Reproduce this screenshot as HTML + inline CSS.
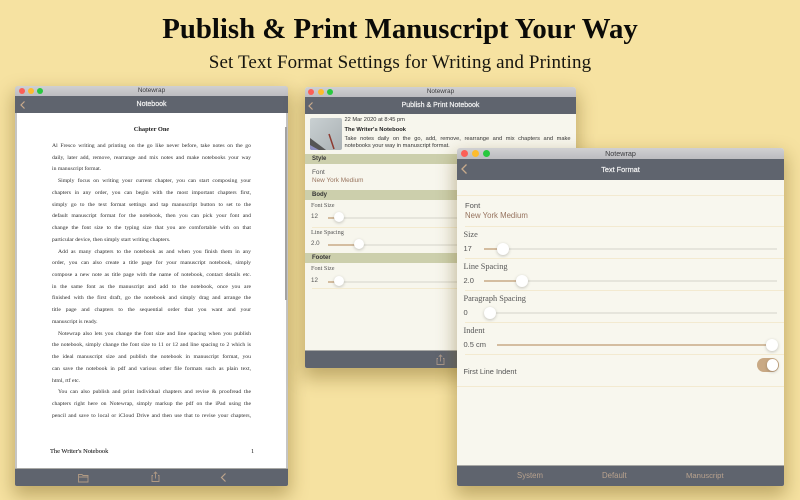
<!DOCTYPE html>
<html><head><meta charset="utf-8"><style>
*{box-sizing:border-box;margin:0;padding:0}
html,body{width:800px;height:500px;overflow:hidden;background:#f6e2a1}
body{position:relative;font-family:"Liberation Sans",sans-serif}
#w{position:absolute;left:0;top:0;width:800px;height:500px;filter:blur(.3px)}
.a,.t,.l{position:absolute}
.t{white-space:nowrap;line-height:1}
.win{position:absolute;border-radius:3px 3px 2px 2px;box-shadow:0 8px 18px 2px rgba(110,85,20,.4);overflow:hidden}
.tb{position:absolute;left:0;right:0;top:0;background:linear-gradient(#d0d0d2,#bcbcc0);text-align:center;color:#3d3d40}
.nav{position:absolute;left:0;right:0;background:#5f646e;color:#f4f4f4;text-align:center;font-weight:normal;-webkit-text-stroke:.2px #f4f4f4}
.bar{position:absolute;left:0;right:0;bottom:0;background:#5f646e;border-top:1px solid #a9a9a6}
.d{position:absolute;border-radius:50%}
.l{left:52px;width:199px;font:5.7px/11.73px "Liberation Serif",serif;color:#2c2c2c;white-space:nowrap;text-align:justify;text-align-last:justify}
.e{text-align-last:left}
.i{text-indent:6px}
.sec{position:absolute;left:0;background:#cccfac;color:#333;font-weight:bold;font-size:6px;height:10px;line-height:10px;padding-left:7px}
.lab{font-family:"Liberation Serif",serif;color:#555}
.trk{position:absolute;height:2px;background:#e6e5dc}
.fil{position:absolute;height:2px;background:#d4bda0}
.kn{position:absolute;border-radius:50%;background:#fff;box-shadow:0 1px 3px rgba(0,0,0,.22)}
.sep{position:absolute;height:1px;background:#f3ead0}
</style></head><body><div id="w">

<div class="t" style="left:0;width:800px;top:13px;text-align:center;font:bold 28.800px/32px 'Liberation Serif',serif;color:#0b0b08">Publish &amp; Print Manuscript Your Way</div>
<div class="t" style="left:0;width:800px;top:52px;text-align:center;font:19px/22px 'Liberation Serif',serif;color:#16150f;letter-spacing:.14px">Set Text Format Settings for Writing and Printing</div>

<!-- Left window -->
<div class="win" style="left:15px;top:86px;width:273px;height:400px;background:#c5c5c4">
  <div class="tb" style="height:10px;font-size:6.400px;line-height:10px">Notewrap</div>
  <div class="d" style="left:3.800px;top:2px;width:6px;height:6px;background:#fb5f57"></div>
  <div class="d" style="left:13px;top:2px;width:6px;height:6px;background:#fdbc2e"></div>
  <div class="d" style="left:22px;top:2px;width:6px;height:6px;background:#28c83f"></div>
  <div class="nav" style="top:10px;height:17px;font-size:7px;line-height:17px">Notebook</div>
  <svg class="a" style="left:4px;top:14px" width="8" height="10"><path d="M5.500 1.500L2 5l3.500 3.500" fill="none" stroke="#c9ab8c" stroke-width="1.200"/></svg>
  <div class="a" style="left:2px;top:27px;width:269px;height:356px;background:#fff"></div>
  <div class="a" style="left:270px;top:41px;width:2px;height:173px;background:#a4a4a4"></div>
  <div class="bar" style="height:18px"></div>
  <svg class="a" style="left:62px;top:386px" width="12" height="12"><path d="M1.500 2.500h3.500l1 1h5v6.500H1.500zM1.500 5h9.500" fill="none" stroke="#b09a84" stroke-width=".9"/></svg>
  <svg class="a" style="left:135px;top:385px" width="12" height="12"><path d="M3 4.500H2v6h7v-6H8M5.500 7.500V1M3.800 2.700L5.500 1l1.700 1.700" fill="none" stroke="#b09a84" stroke-width=".9"/></svg>
  <svg class="a" style="left:204px;top:386px" width="10" height="11"><path d="M6.500 1.500L2.500 5.500l4 4" fill="none" stroke="#bda58c" stroke-width="1.200"/></svg>
</div>
<div class="t" style="left:52px;width:199px;top:125px;text-align:center;font:bold 6.400px/9px 'Liberation Serif',serif;color:#222">Chapter One</div>
<div class="l" style="top:141px">Al Fresco writing and printing on the go like never before, take notes on the go</div>
<div class="l" style="top:152.730px">daily, later add, remove, rearrange and mix notes and make notebooks your way</div>
<div class="l e" style="top:164.460px">in manuscript format.</div>
<div class="l i" style="top:176.190px">Simply focus on writing your current chapter, you can start composing your</div>
<div class="l" style="top:187.920px">chapters in any order, you can begin with the most important chapters first,</div>
<div class="l" style="top:199.650px">simply go to the text format settings and tap manuscript button to set to the</div>
<div class="l" style="top:211.380px">default manuscript format for the notebook, then you can pick your font and</div>
<div class="l" style="top:223.110px">change the font size to the typing size that you are comfortable with on that</div>
<div class="l e" style="top:234.840px">particular device, then simply start writing chapters.</div>
<div class="l i" style="top:246.570px">Add as many chapters to the notebook as and when you finish them in any</div>
<div class="l" style="top:258.300px">order, you can also create a title page for your manuscript notebook, simply</div>
<div class="l" style="top:270.030px">compose a new note as title page with the name of notebook, contact details etc.</div>
<div class="l" style="top:281.760px">in the same font as the manuscript and add to the notebook, once you are</div>
<div class="l" style="top:293.490px">finished with the first draft, go the notebook and simply drag and arrange the</div>
<div class="l" style="top:305.220px">title page and chapters to the sequential order that you want and your</div>
<div class="l e" style="top:316.950px">manuscript is ready.</div>
<div class="l i" style="top:328.680px">Notewrap also lets you change the font size and line spacing when you publish</div>
<div class="l" style="top:340.410px">the notebook, simply change the font size to 11 or 12 and line spacing to 2 which is</div>
<div class="l" style="top:352.140px">the ideal manuscript size and publish the notebook in manuscript format, you</div>
<div class="l" style="top:363.870px">can save the notebook in pdf and various other file formats such as plain text,</div>
<div class="l e" style="top:375.600px">html, rtf etc.</div>
<div class="l i" style="top:387.330px">You can also publish and print individual chapters and revise &amp; proofread the</div>
<div class="l" style="top:399.060px">chapters right here on Notewrap, simply markup the pdf on the iPad using the</div>
<div class="l" style="top:410.790px">pencil and save to local or iCloud Drive and then use that to revise your chapters,</div>
<div class="t" style="left:50px;top:448px;font:6.400px/8px 'Liberation Serif',serif;color:#222;-webkit-text-stroke:.1px #222">The Writer's Notebook</div>
<div class="t" style="left:251px;top:448px;font:6.400px/8px 'Liberation Serif',serif;color:#222">1</div>

<!-- Middle window -->
<div class="win" style="left:305px;top:87px;width:271px;height:281px;background:#f7f6ed">
  <div class="tb" style="height:10px;font-size:6.400px;line-height:10px">Notewrap</div>
  <div class="d" style="left:3px;top:2px;width:6px;height:6px;background:#fb5f57"></div>
  <div class="d" style="left:12.500px;top:2px;width:6px;height:6px;background:#fdbc2e"></div>
  <div class="d" style="left:21.500px;top:2px;width:6px;height:6px;background:#28c83f"></div>
  <div class="nav" style="top:10px;height:17px;font-size:7px;line-height:17px">Publish &amp; Print Notebook</div>
  <svg class="a" style="left:2px;top:14px" width="8" height="10"><path d="M5.500 1.500L2 5l3.500 3.500" fill="none" stroke="#c9ab8c" stroke-width="1.200"/></svg>
  <svg class="a" style="left:5px;top:31px;border-radius:2px" width="32" height="32"><defs><linearGradient id="g" x1="0" y1="0" x2="1" y2="1"><stop offset="0" stop-color="#c9d0d2"/><stop offset="1" stop-color="#aab1b4"/></linearGradient></defs><rect width="32" height="32" fill="url(#g)"/><path d="M0 20L16 32H0z" fill="#555"/><path d="M0 27L9 32H0z" fill="#8e8fc0"/><path d="M24 31L19 16" stroke="#8d3a30" stroke-width="1.500"/></svg>
  <div class="t" style="left:39.500px;top:29px;font-size:5.700px;line-height:9px;color:#333">22 Mar 2020 at 8:45 pm</div>
  <div class="t" style="left:39.500px;top:38px;font-size:5.800px;line-height:10px;font-weight:bold;color:#222">The Writer's Notebook</div>
  <div class="t" style="left:39.500px;top:49px;width:226px;font-size:5.700px;line-height:7px;color:#333;white-space:normal;text-align:justify">Take notes daily on the go, add, remove, rearrange and mix chapters and make notebooks your way in manuscript format.</div>
  <div class="sec" style="top:66.500px;width:271px">Style</div>
  <div class="t" style="left:7px;top:81.500px;font-size:6.400px;line-height:8px;color:#555">Font</div>
  <div class="t" style="left:7px;top:89.500px;font-size:6.400px;line-height:8px;color:#9a7660">New York Medium</div>
  <div class="sec" style="top:103px;width:271px">Body</div>
  <div class="t lab" style="left:6px;top:115px;font-size:6.200px;line-height:8px">Font Size</div>
  <div class="t" style="left:6px;top:126px;font-size:6.200px;line-height:8px;color:#555">12</div>
  <div class="trk" style="left:23px;top:129.500px;width:248px"></div><div class="fil" style="left:23px;top:129.500px;width:12px"></div>
  <div class="kn" style="left:29px;top:125px;width:10px;height:10px"></div>
  <div class="sep" style="left:7px;top:140px;width:264px"></div>
  <div class="t lab" style="left:6px;top:141.500px;font-size:6.200px;line-height:8px">Line Spacing</div>
  <div class="t" style="left:6px;top:153px;font-size:6.200px;line-height:8px;color:#555">2.0</div>
  <div class="trk" style="left:23px;top:156.500px;width:248px"></div><div class="fil" style="left:23px;top:156.500px;width:30px"></div>
  <div class="kn" style="left:48.500px;top:152px;width:10px;height:10px"></div>
  <div class="sec" style="top:166px;width:271px">Footer</div>
  <div class="t lab" style="left:6px;top:178px;font-size:6.200px;line-height:8px">Font Size</div>
  <div class="t" style="left:6px;top:190px;font-size:6.200px;line-height:8px;color:#555">12</div>
  <div class="trk" style="left:23px;top:193.500px;width:248px"></div><div class="fil" style="left:23px;top:193.500px;width:12px"></div>
  <div class="kn" style="left:29px;top:189px;width:10px;height:10px"></div>
  <div class="sep" style="left:7px;top:201px;width:264px"></div>
  <div class="bar" style="height:18px"></div>
  <svg class="a" style="left:130px;top:267px" width="12" height="12"><path d="M3 4.500H2v6h7v-6H8M5.500 7.500V1M3.800 2.700L5.500 1l1.700 1.700" fill="none" stroke="#a8968a" stroke-width=".9"/></svg>
</div>

<!-- Right window -->
<div class="win" style="left:457px;top:148px;width:327px;height:338px;background:#f8f7ee">
  <div class="tb" style="height:11px;font-size:7.200px;line-height:11px">Notewrap</div>
  <div class="d" style="left:3.500px;top:1.500px;width:7px;height:7px;background:#fb5f57"></div>
  <div class="d" style="left:15px;top:1.500px;width:7px;height:7px;background:#fdbc2e"></div>
  <div class="d" style="left:26px;top:1.500px;width:7px;height:7px;background:#28c83f"></div>
  <div class="nav" style="top:11px;height:21px;font-size:7.300px;line-height:21px">Text Format</div>
  <svg class="a" style="left:3px;top:15px" width="10" height="12"><path d="M6.500 1.500L2 6l4.500 4.500" fill="none" stroke="#c9ab8c" stroke-width="1.300"/></svg>
  <div class="sep" style="left:0;top:47px;width:327px"></div>
  <div class="t" style="left:8px;top:53px;font-size:7.600px;line-height:9px;color:#555">Font</div>
  <div class="t" style="left:8px;top:63px;font-size:7.800px;line-height:9px;color:#96735e">New York Medium</div>
  <div class="sep" style="left:8px;top:78px;width:319px"></div>
  <div class="t lab" style="left:6.500px;top:82px;font-size:8.300px;line-height:10px">Size</div>
  <div class="t" style="left:6.500px;top:96px;font-size:7.500px;line-height:9px;color:#555">17</div>
  <div class="trk" style="left:27px;top:100px;width:293px"></div><div class="fil" style="left:27px;top:100px;width:20px"></div>
  <div class="kn" style="left:40px;top:95px;width:12px;height:12px"></div>
  <div class="sep" style="left:8px;top:110px;width:319px"></div>
  <div class="t lab" style="left:6.500px;top:114px;font-size:8.300px;line-height:10px">Line Spacing</div>
  <div class="t" style="left:6.500px;top:128px;font-size:7.500px;line-height:9px;color:#555">2.0</div>
  <div class="trk" style="left:27px;top:132px;width:293px"></div><div class="fil" style="left:27px;top:132px;width:38px"></div>
  <div class="kn" style="left:58.500px;top:127px;width:12px;height:12px"></div>
  <div class="sep" style="left:8px;top:142px;width:319px"></div>
  <div class="t lab" style="left:6.500px;top:146px;font-size:8.300px;line-height:10px">Paragraph Spacing</div>
  <div class="t" style="left:6.500px;top:160px;font-size:7.500px;line-height:9px;color:#555">0</div>
  <div class="trk" style="left:27px;top:164px;width:293px"></div>
  <div class="kn" style="left:27px;top:159px;width:12px;height:12px"></div>
  <div class="sep" style="left:8px;top:174px;width:319px"></div>
  <div class="t lab" style="left:6.500px;top:177.500px;font-size:8.300px;line-height:10px">Indent</div>
  <div class="t" style="left:6.500px;top:192px;font-size:7.500px;line-height:9px;color:#555">0.5 cm</div>
  <div class="fil" style="left:40px;top:196px;width:275px"></div>
  <div class="kn" style="left:309px;top:190.500px;width:12px;height:12px"></div>
  <div class="sep" style="left:8px;top:206px;width:319px"></div>
  <div class="t" style="left:6.500px;top:218.500px;font-size:7.400px;line-height:9px;color:#555">First Line Indent</div>
  <div class="a" style="left:300px;top:210px;width:22px;height:13.500px;border-radius:7px;background:#c9a984"></div>
  <div class="kn" style="left:309.500px;top:211px;width:11.500px;height:11.500px"></div>
  <div class="sep" style="left:0;top:238px;width:327px"></div>
  <div class="bar" style="height:21px"></div>
  <div class="t" style="left:60px;top:323px;font-size:7.800px;line-height:10px;color:#b8a28e">System</div>
  <div class="t" style="left:145px;top:323px;font-size:7.800px;line-height:10px;color:#b8a28e">Default</div>
  <div class="t" style="left:229px;top:323px;font-size:7.700px;line-height:10px;color:#b8a28e">Manuscript</div>
</div>
</div></body></html>
